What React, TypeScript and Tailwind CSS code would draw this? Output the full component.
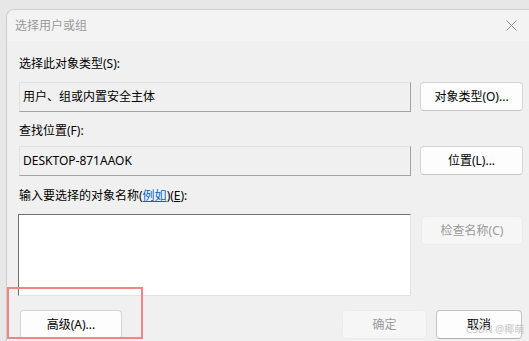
import React from 'react';

const font = { fontFamily: '"Segoe UI", "Noto Sans", "Noto Sans CJK SC", sans-serif' };

const Btn = ({ label, w, disabled = false, strong = false }: { label: React.ReactNode; w: string; disabled?: boolean; strong?: boolean }) => (
    <div
        className={`${w} h-[29px] flex items-center justify-center rounded-[4px] border text-[12px] ${disabled
            ? 'bg-[#f6f6f6] border-[#ececec] text-[#9a9a9a]'
            : strong
                ? 'bg-[#fdfdfd] border-[#c4c4c4] border-b-[#b0b0b0] text-black'
                : 'bg-[#fdfdfd] border-[#d4d4d4] border-b-[#c6c6c6] text-black'
            }`}
    >
        {label}
    </div>
);

export default function App() {
    return (
        <div className="relative w-[529px] h-[341px] overflow-hidden bg-[#e7e7e7]" style={font}>
            <div className="absolute left-[6px] top-[9px] w-[560px] h-[340px] rounded-tl-[8px] border-l border-t border-[#cdcdcd] bg-[#f0f0f0] overflow-hidden">
                {/* Title bar */}
                <div className="h-[31px] bg-[#f3f3f3] flex items-center justify-between pl-[8px] pr-[49px]">
                    <span className="text-[12px] text-[#9b9b9b]">选择用户或组</span>
                    <svg width="11" height="11" viewBox="0 0 11 11">
                        <path d="M0.5 0.5 L10.5 10.5 M10.5 0.5 L0.5 10.5" stroke="#8c8c8c" strokeWidth="1" />
                    </svg>
                </div>

                {/* Body */}
                <div className="pt-[15px] pl-[12px] flex flex-col">
                    <div className="h-4 leading-4 text-[12px] text-black mb-[10px]">选择此对象类型(S):</div>
                    <div className="flex">
                        <div className="w-[392px] h-[30px] border border-[#e2e2e2] border-b-[#a3a3a3] border-r-[#a3a3a3] bg-[#f0f0f0] flex items-center pl-[3px] text-[12px] text-black">
                            用户、组或内置安全主体
                        </div>
                        <div className="ml-[9px]">
                            <Btn w="w-[103px]" label="对象类型(O)..." />
                        </div>
                    </div>

                    <div className="mt-[11px] h-4 leading-4 text-[12px] text-black mb-[7px]">查找位置(F):</div>
                    <div className="flex">
                        <div className="w-[392px] h-[30px] border border-[#e2e2e2] border-b-[#a3a3a3] border-r-[#a3a3a3] bg-[#f0f0f0] flex items-center pl-[3px] text-[12px] text-black">
                            DESKTOP-871AAOK
                        </div>
                        <div className="ml-[9px]">
                            <Btn w="w-[103px]" label="位置(L)..." />
                        </div>
                    </div>

                    <div className="mt-[12px] h-4 leading-4 text-[12px] text-black mb-[10px]">
                        输入要选择的对象名称(<span className="text-[#0066cc] underline">例如</span>)(<span className="underline">E</span>):
                    </div>
                    <div className="flex -ml-[1px]">
                        <div className="w-[393px] h-[82px] bg-white border border-[#e3e3e3] border-t-[#707070] border-l-[#707070]" />
                        <div className="ml-[10px] mt-[2px]">
                            <Btn w="w-[102px]" disabled label="检查名称(C)" />
                        </div>
                    </div>

                    <div className="mt-[14px] flex">
                        <div className="ml-[1px]">
                            <Btn w="w-[102px]" label="高级(A)..." />
                        </div>
                        <div className="ml-[220px]">
                            <Btn w="w-[85px]" disabled label="确定" />
                        </div>
                        <div className="ml-[9px]">
                            <Btn w="w-[86px]" strong label="取消" />
                        </div>
                    </div>
                </div>
            </div>

            {/* annotation rectangle */}
            <div className="absolute left-[7px] top-[287px] w-[136px] h-[52px] border-2 border-[#f08585]" />

            {/* watermark */}
            <div className="absolute left-[466px] top-[323px] text-[10px] leading-[13px] text-[#c4c4c4] opacity-90 whitespace-nowrap">
                CSDN @椰萌
            </div>
        </div>
    );
}
